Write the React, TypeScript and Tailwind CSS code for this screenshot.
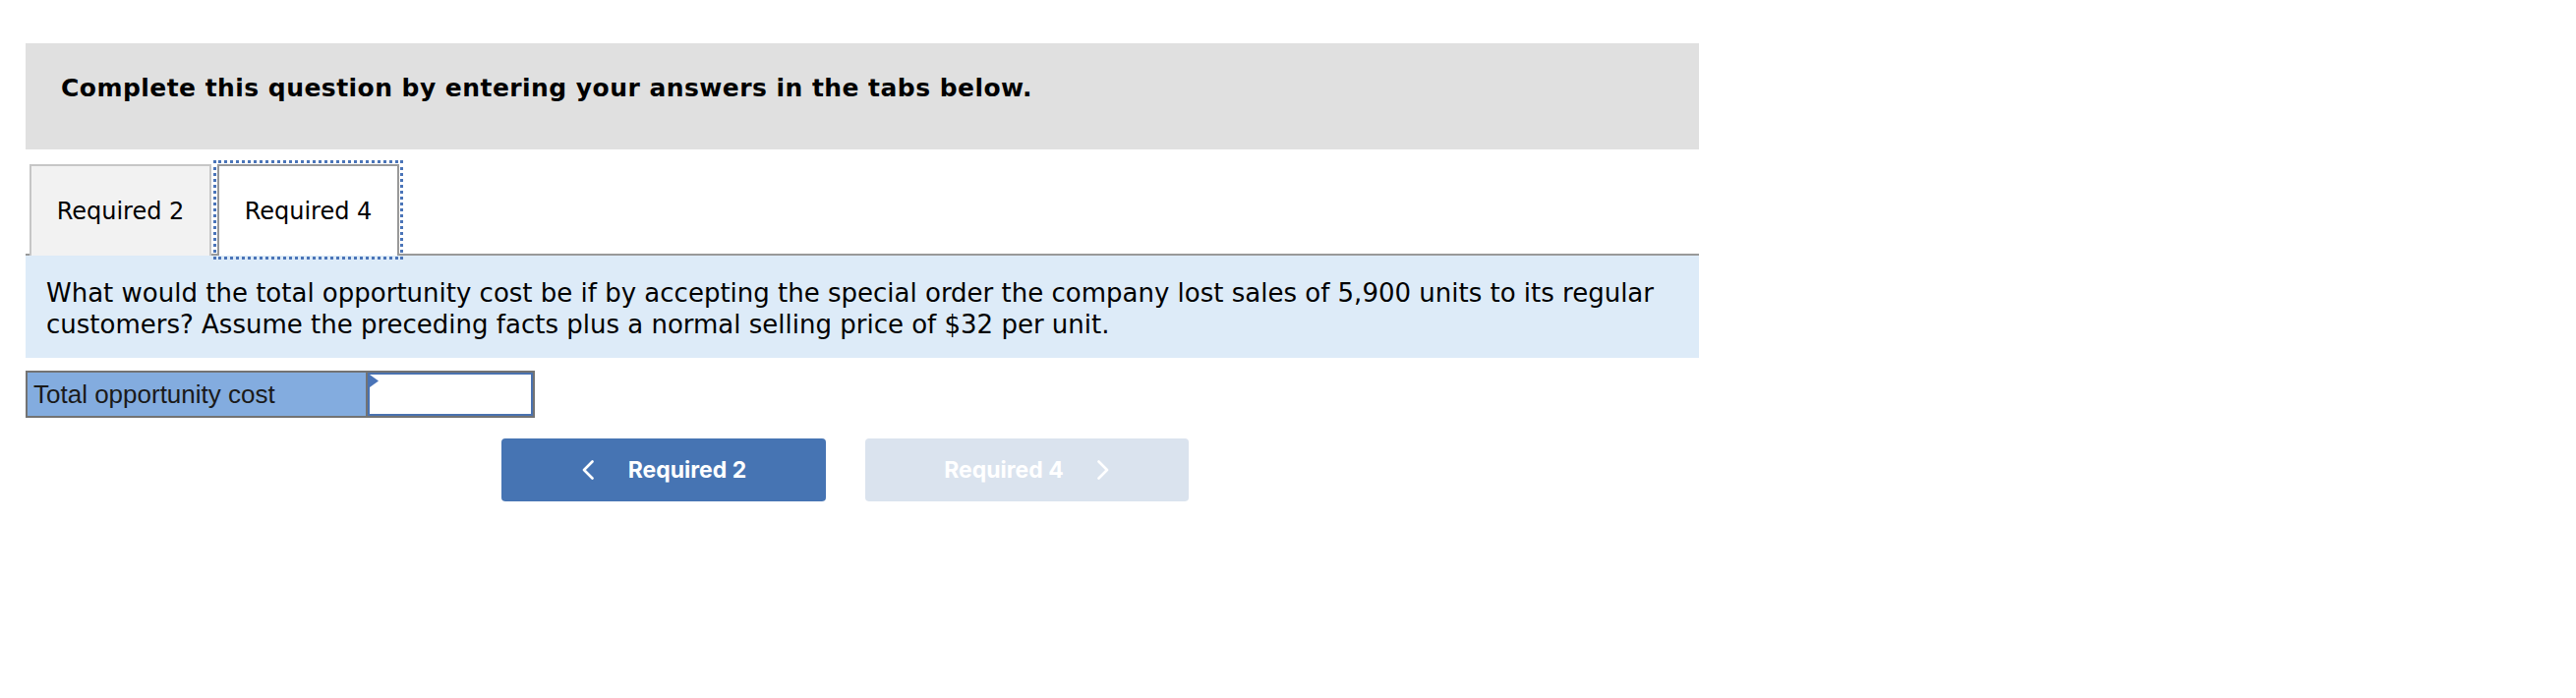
import React from "react";

function ChevronLeft() {
  return (
    <svg width="14" height="20" viewBox="0 0 14 20" fill="none" className="shrink-0">
      <polyline points="11.5,1.5 3,10 11.5,18.5" stroke="white" strokeWidth="2.6" strokeLinecap="round" strokeLinejoin="round" />
    </svg>
  );
}

function ChevronRight() {
  return (
    <svg width="14" height="20" viewBox="0 0 14 20" fill="none" className="shrink-0">
      <polyline points="2.5,1.5 11,10 2.5,18.5" stroke="white" strokeWidth="2.6" strokeLinecap="round" strokeLinejoin="round" />
    </svg>
  );
}

export default function App() {
  return (
    <div className="w-[2620px] h-[710px] bg-white pt-[44px] pl-[26px]">
      <div className="w-[1702px]">
        {/* Header */}
        <div className="h-[108px] bg-[#e0e0e0] pt-[32px] pl-[36px]">
          <p className="font-['DejaVu_Sans',sans-serif] font-bold text-[25px] tracking-[0.45px] leading-[28px] text-black">
            Complete this question by entering your answers in the tabs below.
          </p>
        </div>

        {/* Tabs */}
        <div className="mt-[15px] flex items-end pl-[4px] h-[93px] border-b-2 border-[#999999]">
          <div className="w-[185px] h-[93px] -mb-[2px] bg-[#f2f2f2] border-2 border-b-0 border-[#c6c6c6] flex items-center justify-center font-['DejaVu_Sans',sans-serif] text-[24px] text-black">
            Required 2
          </div>
          <div className="ml-[6px] w-[185px] h-[93px] -mb-[2px] bg-white border-2 border-b-0 border-[#999999] outline-[3px] outline-dotted outline-[#4a74b8] outline-offset-[1px] flex items-center justify-center font-['DejaVu_Sans',sans-serif] text-[24px] text-black relative z-10">
            Required 4
          </div>
        </div>

        {/* Question */}
        <div className="bg-[#ddebf8] h-[104px] pt-[23px] pl-[21px]">
          <p className="font-['DejaVu_Sans',sans-serif] text-[26px] leading-[31.5px] text-black">
            What would the total opportunity cost be if by accepting the special order the company lost sales of 5,900 units to its regular
            <br />
            customers? Assume the preceding facts plus a normal selling price of $32 per unit.
          </p>
        </div>

        {/* Answer row */}
        <div className="mt-[13px] w-[518px] h-[48px] border-2 border-[#737373] flex">
          <div className="w-[346px] bg-[#83acdf] border-r-2 border-[#737373] flex items-center pl-[6px] font-['Liberation_Sans',Arial,sans-serif] text-[26px] text-[#1a1a1a]">
            Total opportunity cost
          </div>
          <div className="relative flex-1 bg-white border-2 border-[#4a72b0]">
            <svg width="9" height="13" viewBox="0 0 9 13" className="absolute left-0 top-0">
              <polygon points="0,0 9,6.5 0,13" fill="#4a74b8" />
            </svg>
          </div>
        </div>

        {/* Nav buttons */}
        <div className="mt-[21px] flex gap-[40px] pl-[484px]">
          <button className="w-[330px] h-[64px] rounded-[4px] bg-[#4674b3] flex items-center justify-center gap-[34px] text-white font-['Inter',sans-serif] font-bold text-[23px]">
            <ChevronLeft />
            <span>Required 2</span>
          </button>
          <button className="w-[329px] h-[64px] rounded-[4px] bg-[#dae3ee] flex items-center justify-center gap-[33px] text-white font-['Inter',sans-serif] font-bold text-[23px]">
            <span>Required 4</span>
            <ChevronRight />
          </button>
        </div>
      </div>
    </div>
  );
}
